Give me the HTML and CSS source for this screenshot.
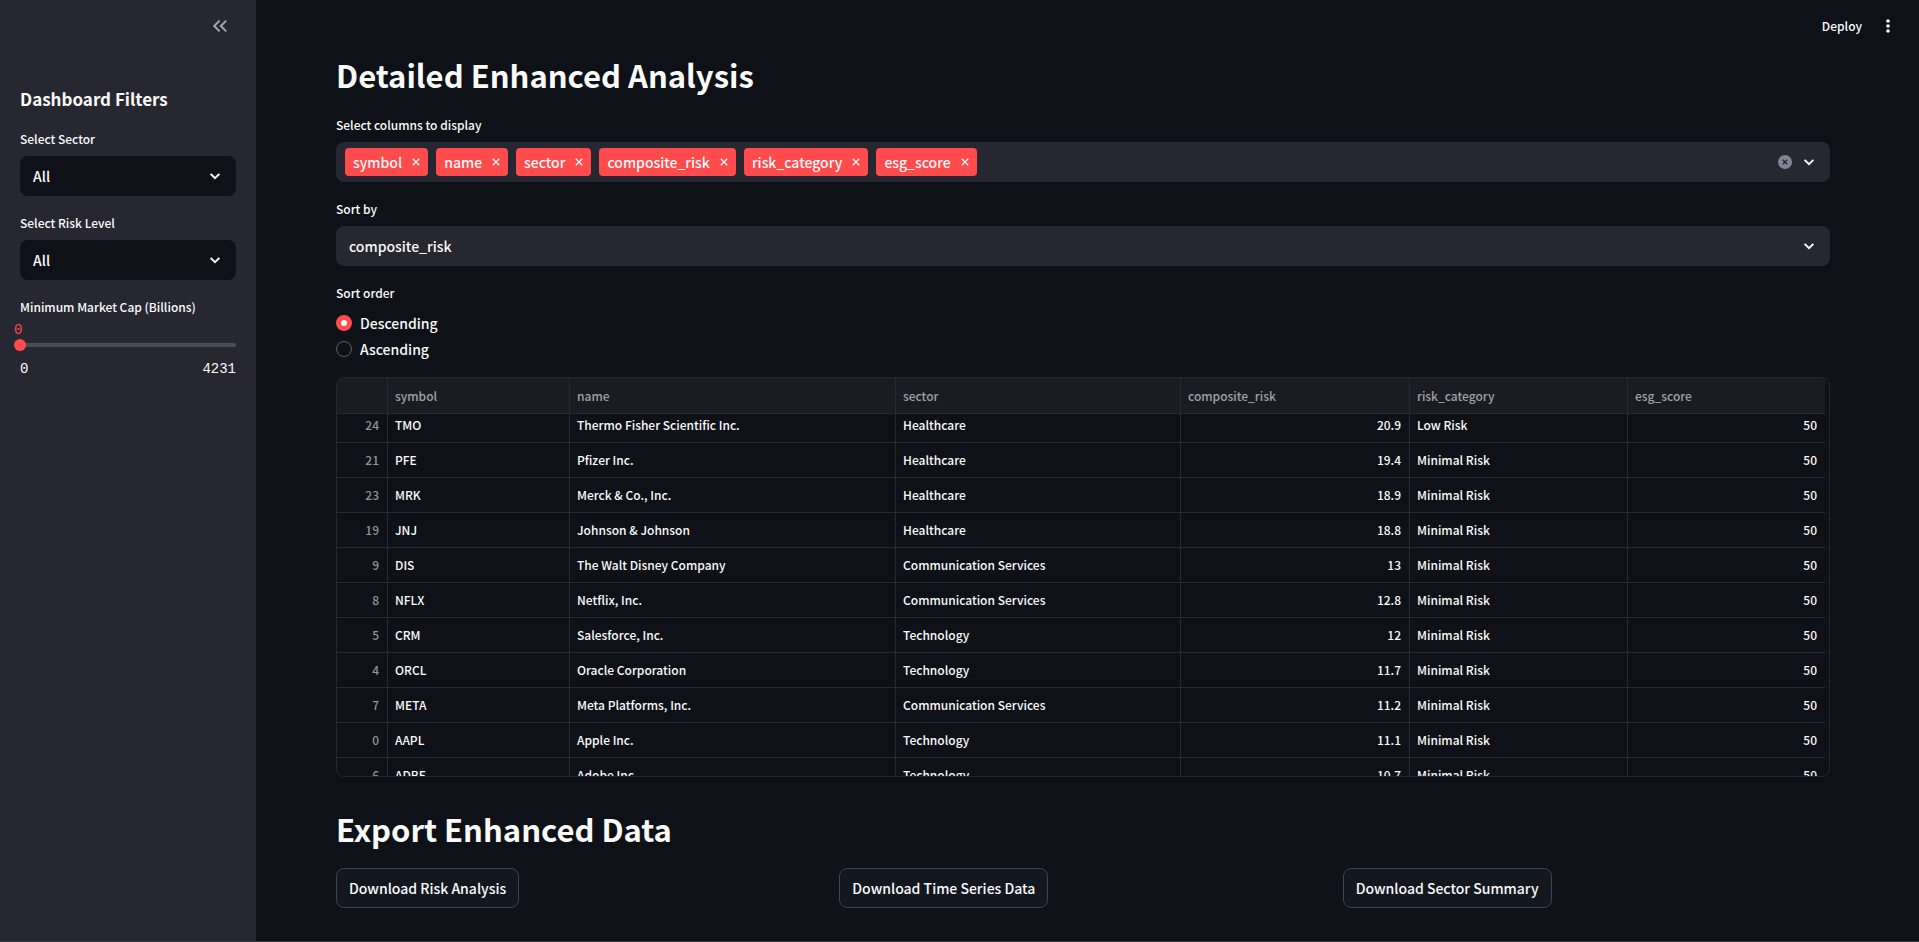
FILE: index.html
```html
<!DOCTYPE html>
<html lang="en">
<head>
<meta charset="utf-8">
<title>Enhanced Analysis Dashboard</title>
<link rel="stylesheet" href="styles.css">
</head>
<body>
<svg class="symbols" aria-hidden="true">
  <symbol id="chevron" viewBox="0 0 16 16"><path d="M3.6 5.9 8 10.2l4.4-4.3" fill="none" stroke="currentColor" stroke-width="2"/></symbol>
  <symbol id="cross" viewBox="0 0 8 8"><path d="m.8.8 6.4 6.4M7.200.8.8 7.200" fill="none" stroke="currentColor" stroke-width="1.300"/></symbol>
</svg>
<div class="app">
  <aside class="sidebar">
    <div class="sidebar-top">
      <button class="icon-button muted" aria-label="Collapse sidebar"><svg width="20" height="20" viewBox="0 0 20 20"><path d="M9.600 4.600 4.200 10l5.400 5.400M16.200 4.600 10.800 10l5.400 5.400" fill="none" stroke="currentColor" stroke-width="2"/></svg></button>
    </div>
    <h2 class="sidebar-title">Dashboard Filters</h2>
    <div class="field">
      <label class="label" for="sector">Select Sector</label>
      <div class="select-box"><select id="sector" class="select dark"><option>All</option></select><svg class="chevron"><use href="#chevron"/></svg></div>
    </div>
    <div class="field">
      <label class="label" for="risk">Select Risk Level</label>
      <div class="select-box"><select id="risk" class="select dark"><option>All</option></select><svg class="chevron"><use href="#chevron"/></svg></div>
    </div>
    <div class="field">
      <label class="label" for="cap">Minimum Market Cap (Billions)</label>
      <output class="slider-value" for="cap">0</output>
      <div class="slider-track"><input id="cap" class="slider" type="range" min="0" max="4231" value="0"></div>
      <div class="slider-ends"><span>0</span><span>4231</span></div>
    </div>
  </aside>
  <div class="page">
    <header class="toolbar">
      <button class="deploy">Deploy</button>
      <button class="icon-button" aria-label="Main menu"><svg width="16" height="16" viewBox="0 0 16 16" fill="currentColor"><circle cx="8" cy="3" r="1.800"/><circle cx="8" cy="8" r="1.800"/><circle cx="8" cy="13" r="1.800"/></svg></button>
    </header>
    <main class="content">
      <h1 class="heading">Detailed Enhanced Analysis</h1>
      <div class="field">
        <span class="label" id="columns-label">Select columns to display</span>
        <div class="multiselect" role="group" aria-labelledby="columns-label">
          <span class="tag">symbol<button class="tag-x" aria-label="Remove symbol"><svg><use href="#cross"/></svg></button></span>
          <span class="tag">name<button class="tag-x" aria-label="Remove name"><svg><use href="#cross"/></svg></button></span>
          <span class="tag">sector<button class="tag-x" aria-label="Remove sector"><svg><use href="#cross"/></svg></button></span>
          <span class="tag">composite_risk<button class="tag-x" aria-label="Remove composite_risk"><svg><use href="#cross"/></svg></button></span>
          <span class="tag">risk_category<button class="tag-x" aria-label="Remove risk_category"><svg><use href="#cross"/></svg></button></span>
          <span class="tag">esg_score<button class="tag-x" aria-label="Remove esg_score"><svg><use href="#cross"/></svg></button></span>
          <span class="multi-actions">
            <button class="bare clear" aria-label="Clear all"><svg width="14" height="14" viewBox="0 0 14 14"><circle cx="7" cy="7" r="7" fill="#808495"/><path d="m4.800 4.800 4.400 4.400M9.200 4.800 4.800 9.200" stroke="#262730" stroke-width="1.400"/></svg></button>
            <button class="bare" aria-label="Open"><svg width="16" height="16"><use href="#chevron"/></svg></button>
          </span>
        </div>
      </div>
      <div class="field">
        <label class="label" for="sort">Sort by</label>
        <div class="select-box"><select id="sort" class="select"><option>composite_risk</option></select><svg class="chevron"><use href="#chevron"/></svg></div>
      </div>
      <fieldset class="radios">
        <legend class="label">Sort order</legend>
        <label class="radio"><input type="radio" name="order" checked>Descending</label>
        <label class="radio"><input type="radio" name="order">Ascending</label>
      </fieldset>
      <div class="grid">
        <table class="table">
          <colgroup><col class="c-index"><col class="c-symbol"><col class="c-name"><col class="c-sector"><col class="c-risk"><col class="c-category"><col class="c-esg"></colgroup>
          <thead><tr><th></th><th>symbol</th><th>name</th><th>sector</th><th>composite_risk</th><th>risk_category</th><th>esg_score</th></tr></thead>
          <tbody>
            <tr><td>24</td><td>TMO</td><td>Thermo Fisher Scientific Inc.</td><td>Healthcare</td><td>20.9</td><td>Low Risk</td><td>50</td></tr>
            <tr><td>21</td><td>PFE</td><td>Pfizer Inc.</td><td>Healthcare</td><td>19.4</td><td>Minimal Risk</td><td>50</td></tr>
            <tr><td>23</td><td>MRK</td><td>Merck &amp; Co., Inc.</td><td>Healthcare</td><td>18.9</td><td>Minimal Risk</td><td>50</td></tr>
            <tr><td>19</td><td>JNJ</td><td>Johnson &amp; Johnson</td><td>Healthcare</td><td>18.8</td><td>Minimal Risk</td><td>50</td></tr>
            <tr><td>9</td><td>DIS</td><td>The Walt Disney Company</td><td>Communication Services</td><td>13</td><td>Minimal Risk</td><td>50</td></tr>
            <tr><td>8</td><td>NFLX</td><td>Netflix, Inc.</td><td>Communication Services</td><td>12.8</td><td>Minimal Risk</td><td>50</td></tr>
            <tr><td>5</td><td>CRM</td><td>Salesforce, Inc.</td><td>Technology</td><td>12</td><td>Minimal Risk</td><td>50</td></tr>
            <tr><td>4</td><td>ORCL</td><td>Oracle Corporation</td><td>Technology</td><td>11.7</td><td>Minimal Risk</td><td>50</td></tr>
            <tr><td>7</td><td>META</td><td>Meta Platforms, Inc.</td><td>Communication Services</td><td>11.2</td><td>Minimal Risk</td><td>50</td></tr>
            <tr><td>0</td><td>AAPL</td><td>Apple Inc.</td><td>Technology</td><td>11.1</td><td>Minimal Risk</td><td>50</td></tr>
            <tr><td>6</td><td>ADBE</td><td>Adobe Inc.</td><td>Technology</td><td>10.7</td><td>Minimal Risk</td><td>50</td></tr>
          </tbody>
        </table>
      </div>
      <h1 class="heading">Export Enhanced Data</h1>
      <div class="downloads">
        <div><button class="download">Download Risk Analysis</button></div>
        <div><button class="download">Download Time Series Data</button></div>
        <div><button class="download">Download Sector Summary</button></div>
      </div>
    </main>
  </div>
</div>
</body>
</html>
```
FILE: styles.css
```css
* { box-sizing: border-box; }

body {
  margin: 0;
  background: #0e1117;
  color: #fafafa;
  font-family: "Noto Sans CJK SC", "Noto Sans", sans-serif;
  font-size: 14px;
  font-weight: 500;
  line-height: 24px;
}

button, select, input { font: inherit; color: inherit; }
button { cursor: pointer; }
svg { display: block; }
.symbols { display: none; }

.app { display: flex; min-height: 100vh; border-bottom: 1px solid #38393f; }

/* Sidebar */
.sidebar { flex: none; width: 256px; padding: 0 20px; background: #262730; }
.sidebar-top { display: flex; justify-content: flex-end; align-items: center; height: 52px; padding-right: 6px; }
.sidebar-title { margin: 32px 0 14px; font-size: 17px; line-height: 30px; font-weight: 700; }

.icon-button { display: flex; padding: 0; border: 0; background: none; }
.muted { color: #a3a8b4; }

.field { margin-bottom: 16px; }
.label { display: block; padding: 0; margin-bottom: 6px; font-size: 12px; line-height: 22px; }

.select-box { position: relative; }
.select {
  display: block;
  width: 100%;
  height: 40px;
  padding: 0 13px;
  border: 0;
  border-radius: 8px;
  background: #262730;
  appearance: none;
}
.select.dark { background: #0e1117; }
.chevron { position: absolute; top: 12px; right: 13px; width: 16px; height: 16px; pointer-events: none; }

.slider-value, .slider-ends { font-family: "Liberation Mono", monospace; font-size: 14px; line-height: 20px; }
.slider-value { display: block; width: 10px; margin: -4px 0 3px -6px; color: #ff4b4b; }
.slider-track { height: 4px; border-radius: 4px; background: #4b4c57; }
.slider {
  display: block;
  width: calc(100% + 12px);
  height: 12px;
  margin: 0 -6px;
  position: relative;
  top: -4px;
  background: none;
  appearance: none;
}
.slider::-webkit-slider-thumb { width: 12px; height: 12px; border-radius: 50%; background: #ff4b4b; appearance: none; }
.slider-ends { display: flex; justify-content: space-between; margin-top: 12px; }

/* Main area */
.page { flex: 1; min-width: 0; }
.toolbar { display: flex; justify-content: flex-end; align-items: center; gap: 18px; height: 52px; padding-right: 23px; }
.deploy { padding: 0; border: 0; background: none; font-size: 12px; }
.content { padding: 0 89px 0 80px; }

.heading { margin: 0; padding: 1px 0 17px; font-size: 31px; line-height: 44px; font-weight: 700; }

.multiselect { display: flex; align-items: center; gap: 8px; height: 40px; padding: 0 13px 0 9px; border-radius: 8px; background: #262730; }
.tag { display: flex; align-items: center; gap: 10px; height: 28px; padding: 0 8px; border-radius: 4px; background: #ff4b4b; }
.bare, .tag-x { display: flex; padding: 0; border: 0; background: none; }
.tag-x svg { width: 8px; height: 8px; }
.multi-actions { display: flex; align-items: center; gap: 9px; margin-left: auto; }

.radios { display: flex; flex-direction: column; gap: 2px; margin: 0 0 16px; padding: 0; border: 0; }
.radios .label { margin-bottom: 7px; }
.radio { display: flex; align-items: center; gap: 8px; height: 24px; }
.radio input { width: 16px; height: 16px; margin: 0; border: 1px solid #5d6068; border-radius: 50%; appearance: none; }
.radio input:checked { border: 5px solid #ff4b4b; background: #fafafa; }

/* Data grid */
.grid { height: 400px; margin-bottom: 29px; overflow: hidden; border: 1px solid #25282d; border-radius: 8px; }
.table { width: calc(100% - 4px); table-layout: fixed; border-collapse: separate; border-spacing: 0; font-size: 12px; line-height: 20px; }
.c-index { width: 51px; }
.c-symbol { width: 182px; }
.c-name { width: 326px; }
.c-sector { width: 285px; }
.c-risk { width: 229px; }
.c-category { width: 218px; }
.c-esg { width: 197px; }
.table th, .table td { height: 35px; padding: 0 8px 0 7px; border: 0 solid #282a2f; border-width: 0 1px 1px 0; text-align: left; white-space: nowrap; }
.table th { height: 36px; background: #1a1c24; color: #a0a1a5; font-weight: 500; }
.table th:last-child, .table td:last-child { border-right: 0; }
.table td:first-child { color: #939598; }
.table td:nth-child(1), .table td:nth-child(5), .table td:nth-child(7) { text-align: right; }
.table tbody tr:first-child td { height: 29px; padding-bottom: 6px; }

.downloads { display: grid; grid-template-columns: repeat(3, 1fr); gap: 16px; }
.download { height: 40px; padding: 0 12px; border: 1px solid #41444c; border-radius: 8px; background: #131720; }
```
